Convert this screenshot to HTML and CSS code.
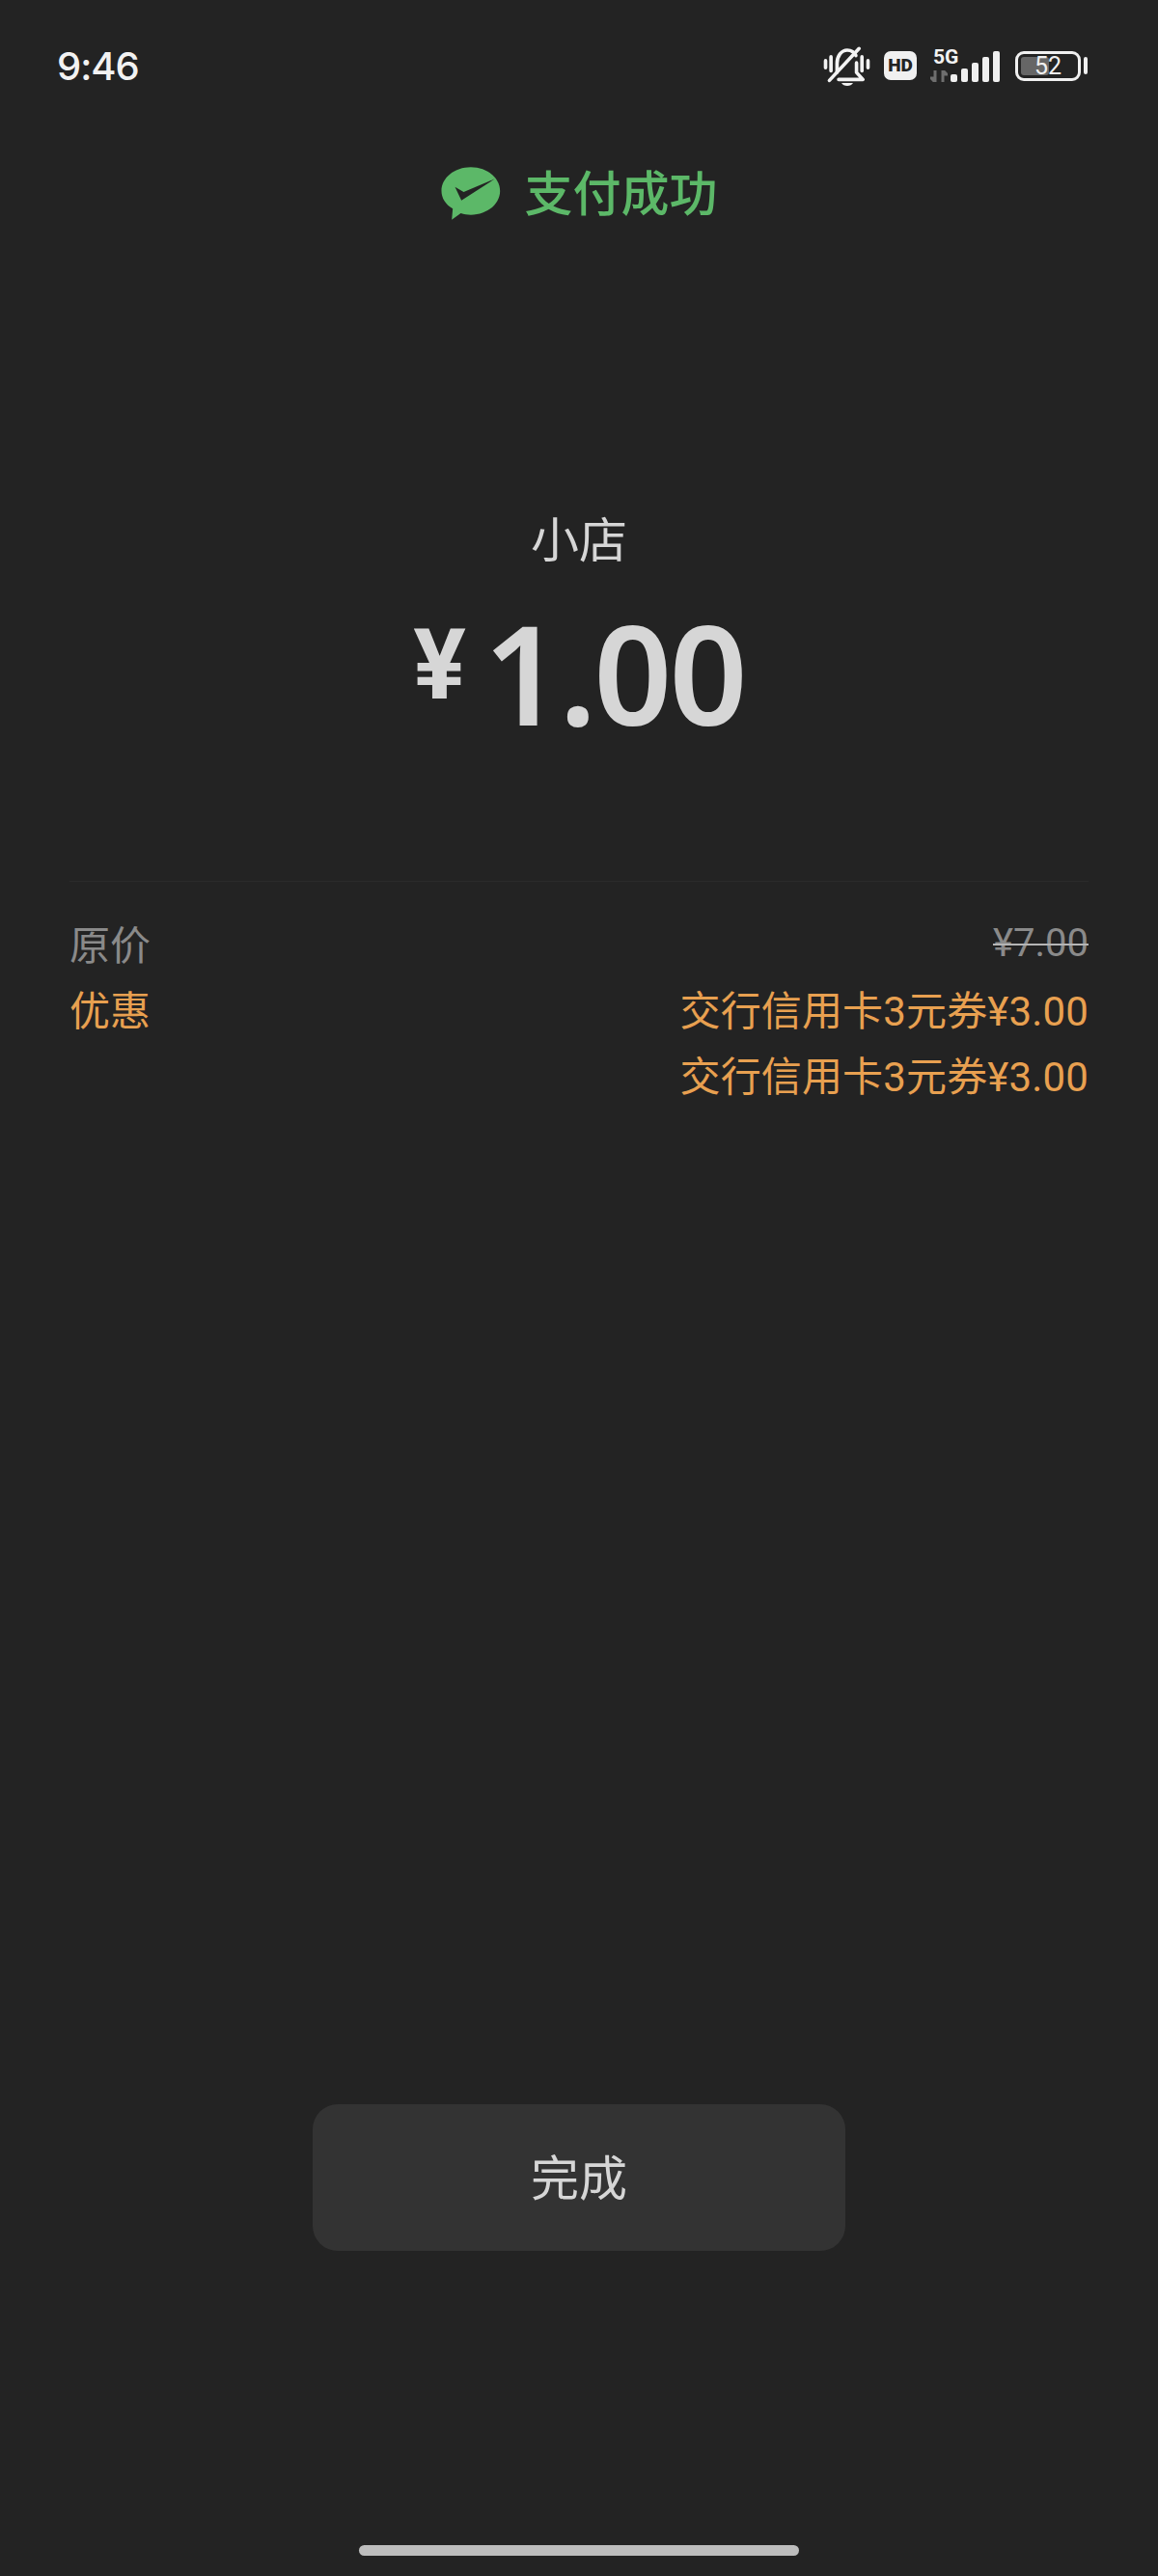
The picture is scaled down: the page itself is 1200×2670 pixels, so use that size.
FILE: index.html
```html
<!DOCTYPE html>
<html>

<head>
    <meta charset="utf-8">
    <title>支付成功</title>
    <link rel="stylesheet" href="styles.css">
</head>

<body>

    <div class="page">

        <!-- status bar -->
        <div class="status">
            <span class="time">9:46</span>
            <div class="status-icons">
                <svg class="bell" viewBox="100 50 150 130">
                    <path d="M110 98v22M127 86v44M224 86v44M243 98v22" fill="none" stroke="#f2f2f2" stroke-width="11" stroke-linecap="round"/>
                    <path d="M146 135v-28c0-24 14-42 32-42 12 0 22 6 27 17M207 105v30l20 22h-76" fill="none" stroke="#f2f2f2" stroke-width="11" stroke-linecap="round" stroke-linejoin="round"/>
                    <path d="M215 60L122 160" fill="none" stroke="#f2f2f2" stroke-width="11" stroke-linecap="round"/>
                    <path d="M160 168h36c-3 6-10 9-18 9s-15-3-18-9z" fill="#f2f2f2"/>
                </svg>
                <span class="hd">HD</span>
                <div class="network">
                    <span class="net-label">5G</span>
                    <svg class="net-arrows" viewBox="0 0 18 12">
                        <path d="M5 0v12L1 8h4M13 12V0l4 4h-4" fill="#6e6e6e" stroke="#6e6e6e" stroke-width="3"/>
                    </svg>
                    <div class="bars">
                        <i class="bar" style="height:8px"></i>
                        <i class="bar" style="height:14px"></i>
                        <i class="bar" style="height:20px"></i>
                        <i class="bar" style="height:26px"></i>
                        <i class="bar" style="height:32px"></i>
                    </div>
                </div>
                <div class="battery">
                    <div class="battery-body">
                        <div class="battery-fill" style="width:52%"></div>
                        <span class="battery-text">52</span>
                    </div>
                    <i class="battery-tip"></i>
                </div>
            </div>
        </div>

        <!-- title -->
        <div class="title">
            <svg class="logo" viewBox="55 68 185 165">
                <path d="M147 69c50 0 91 33 91 74s-41 74-91 74c-11 0-21-2-31-5l-28 20 3-34c-22-13-35-33-35-55 0-41 41-74 91-74z" fill="#5cb868"/>
                <path d="M98 130l27 16 97-41-104 67z" fill="#232323"/>
            </svg>
            <span class="title-text">支付成功</span>
        </div>

        <div class="shop">小店</div>

        <div class="amount">
            <span class="yen">¥</span>
            <span class="num">1.00</span>
        </div>

        <div class="divider"></div>

        <!-- price details -->
        <div class="details">
            <div class="row">
                <span class="label">原价</span>
                <span class="original">¥7.00</span>
            </div>
            <div class="row orange">
                <span class="label">优惠</span>
                <span class="coupon">交行信用卡3元券¥3.00</span>
            </div>
            <div class="row orange">
                <span class="label"></span>
                <span class="coupon">交行信用卡3元券¥3.00</span>
            </div>
        </div>

        <button type="button" class="done">完成</button>

        <div class="home-bar"></div>

    </div>

</body>

</html>
```

FILE: styles.css
```css
body {
    margin: 0;
    background-color: #232323;
    font-family: "Roboto", "Noto Sans CJK SC", sans-serif;
}

.page {
    height: 2670px;
    display: flex;
    flex-direction: column;
    overflow: hidden;
}

/* status bar */
.status {
    height: 136px;
    flex-shrink: 0;
    padding: 0 73px 0 59px;
    display: flex;
    align-items: center;
    justify-content: space-between;
}

.time {
    color: #f2f2f2;
    font-family: "Inter", sans-serif;
    font-size: 40px;
    font-weight: 500;
    letter-spacing: -1px;
}

.status-icons {
    display: flex;
    align-items: center;
    gap: 14px;
}

.bell {
    width: 50px;
    height: 43px;
}

.hd {
    width: 34px;
    height: 30px;
    border-radius: 7px;
    background-color: #f0f0f0;
    color: #232323;
    font-family: "Roboto", sans-serif;
    font-size: 19px;
    font-weight: 900;
    line-height: 30px;
    text-align: center;
}

.network {
    position: relative;
    width: 72px;
    height: 34px;
}

.net-label {
    position: absolute;
    left: 3px;
    top: -2px;
    color: #f2f2f2;
    font-family: "Roboto", sans-serif;
    font-size: 21px;
    font-weight: 700;
    line-height: 20px;
}

.net-arrows {
    position: absolute;
    left: 0;
    bottom: 0;
    width: 18px;
    height: 12px;
}

.bars {
    position: absolute;
    right: 0;
    bottom: 0;
    display: flex;
    align-items: flex-end;
    gap: 4px;
}

.bar {
    width: 7px;
    border-radius: 2px;
    background-color: #f0f0f0;
}

.battery {
    display: flex;
    align-items: center;
    gap: 3px;
    margin-left: 2px;
}

.battery-body {
    position: relative;
    box-sizing: border-box;
    width: 68px;
    height: 31px;
    padding: 3px;
    border: 3px solid #f0f0f0;
    border-radius: 9px;
}

.battery-fill {
    height: 100%;
    border-radius: 3px;
    background-color: #666666;
}

.battery-text {
    position: absolute;
    left: 0;
    right: 0;
    top: 0;
    color: #f0f0f0;
    font-family: "Roboto", sans-serif;
    font-size: 25px;
    line-height: 25px;
    text-align: center;
}

.battery-tip {
    width: 4px;
    height: 18px;
    border-radius: 2px;
    background-color: #f0f0f0;
}

/* title */
.title {
    height: 64px;
    margin-top: 32px;
    display: flex;
    align-items: center;
    justify-content: center;
    gap: 25px;
    color: #5cb868;
    font-size: 50px;
    flex-shrink: 0;
}

.title-text {
    margin-bottom: 6px;
    font-weight: 500;
}

.logo {
    width: 62px;
    height: 55px;
}

.shop {
    height: 60px;
    margin-top: 299px;
    color: #d6d6d6;
    font-size: 50px;
    line-height: 60px;
    text-align: center;
}

.amount {
    height: 146px;
    margin-top: 38px;
    display: flex;
    justify-content: center;
    align-items: flex-start;
    gap: 18px;
    color: #d6d6d6;
}

.yen {
    font-size: 102px;
    font-weight: 700;
    line-height: 146px;
    margin-top: -13px;
}

.num {
    margin-top: -5px;
    font-family: "Noto Sans", sans-serif;
    font-size: 142px;
    font-weight: 600;
    letter-spacing: -3px;
    line-height: 146px;
}

.divider {
    height: 1px;
    margin: 138px 72px 0;
    background-color: #2b2b2b;
}

.details {
    padding: 28px 72px 0;
}

.row {
    height: 68px;
    display: flex;
    align-items: center;
    justify-content: space-between;
    font-size: 42px;
}

.label {
    color: #8a8a8a;
}

.orange,
.orange .label {
    color: #e8a050;
}

.coupon {
    letter-spacing: 0.15px;
}

.original {
    padding-top: 3px;
    color: #8a8a8a;
    font-size: 40px;
    text-decoration: line-through;
    text-decoration-color: #b5b5b5;
    text-decoration-thickness: 2px;
}

.done {
    display: block;
    width: 552px;
    height: 152px;
    margin: auto auto 0;
    padding: 0 0 6px;
    border: none;
    border-radius: 26px;
    background-color: #333333;
    color: #d6d6d6;
    font-family: inherit;
    font-size: 50px;
}

.home-bar {
    width: 456px;
    height: 11px;
    margin: 305px auto 21px;
    border-radius: 6px;
    background-color: #bdbdbd;
    flex-shrink: 0;
}
```
